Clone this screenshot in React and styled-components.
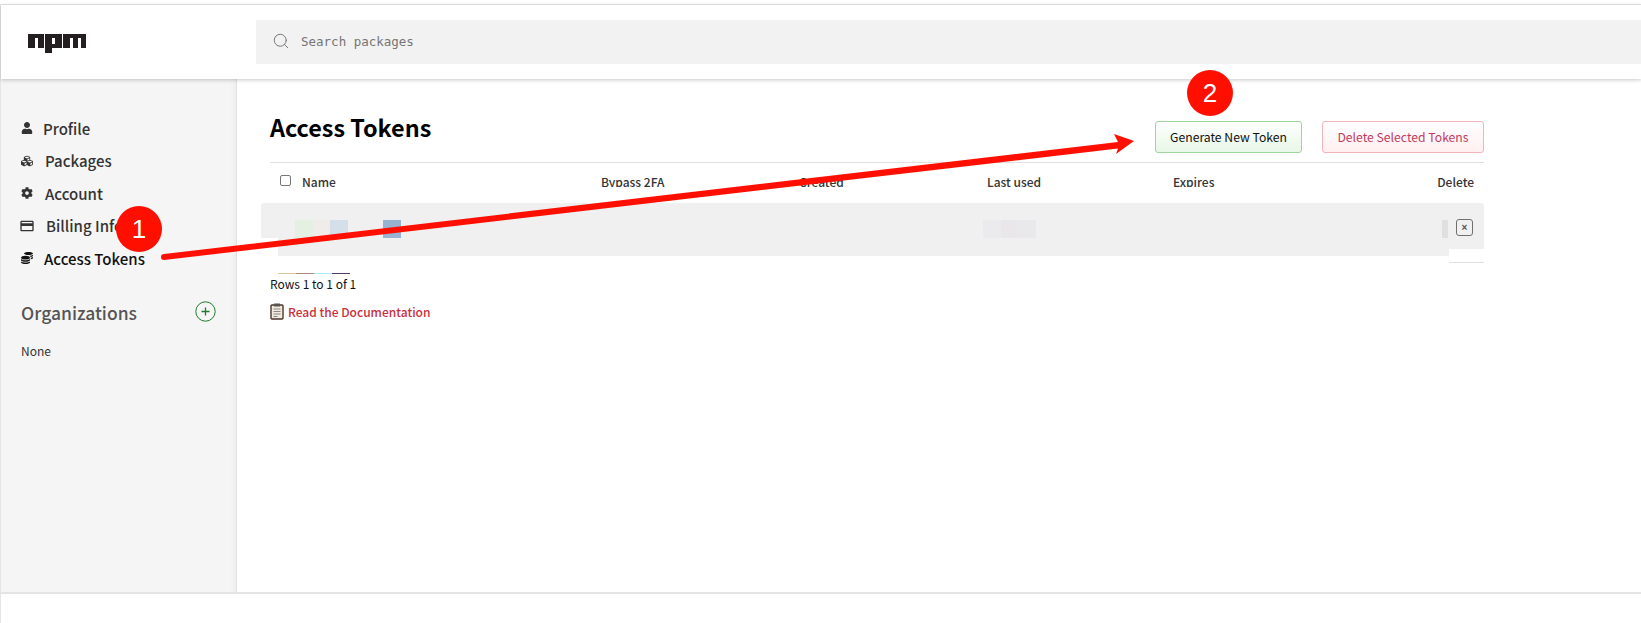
import React from 'react'
import styled, { createGlobalStyle } from 'styled-components'
import { FaUser, FaCubes, FaCog, FaCoins } from 'react-icons/fa'
import { MdCreditCard } from 'react-icons/md'
import { FiSearch } from 'react-icons/fi'

const sans = `"Noto Sans CJK SC", "Noto Sans CJK JP", "Noto Sans", sans-serif`

const GlobalStyle = createGlobalStyle`
  html, body {
    margin: 0;
    padding: 0;
    background: #fff;
    font-family: ${sans};
  }
`

const Page = styled.div`
  position: relative;
  width: 1641px;
  height: 623px;
  overflow: hidden;
  padding-top: 4px;
  box-sizing: border-box;
`

const Frame = styled.div`
  display: flex;
  flex-direction: column;
  height: 100%;
  border-top: 1px solid #e5e5e5;
  border-left: 1px solid #e5e5e5;
`

const Header = styled.header`
  display: flex;
  align-items: center;
  flex: 0 0 74px;
  box-shadow: 0 1px 4px rgba(0, 0, 0, 0.22);
  position: relative;
  z-index: 2;
  background: #fff;
`

const Logo = styled.svg`
  width: 58px;
  height: 19px;
  margin: 3px 0 0 27px;
  flex: none;
`

const SearchBox = styled.div`
  display: flex;
  align-items: center;
  gap: 11px;
  flex: 1;
  height: 44px;
  margin-left: 170px;
  padding: 0 0 2px 16px;
  box-sizing: border-box;
  background: #f2f2f2;
  color: #757575;
  font: 12.5px "DejaVu Sans Mono", "Liberation Mono", monospace;
`

const Body = styled.div`
  display: flex;
  flex: 0 0 513px;
`

const Sidebar = styled.aside`
  flex: 0 0 236px;
  box-sizing: border-box;
  padding: 38px 20px 0 20px;
  background: #f5f5f5;
  border-right: 1px solid #e0e0e0;
  box-shadow: inset -8px 0 8px -8px rgba(0, 0, 0, 0.06);
`

const NavList = styled.nav`
  display: flex;
  flex-direction: column;
  gap: 10px;
`

const NavItem = styled.div`
  display: flex;
  align-items: center;
  height: 22.5px;
  font-size: 15px;
  font-weight: 500;
  color: ${p => (p.$active ? '#111' : '#333')};
  svg {
    flex: none;
    width: ${p => p.$icon || 12}px;
    height: ${p => p.$icon || 12}px;
    margin-left: ${p => (p.$icon ? -2 : 0)}px;
    margin-right: ${p => p.$gap}px;
  }
`

const OrgHead = styled.div`
  display: flex;
  align-items: center;
  justify-content: space-between;
  margin-top: 30px;
  font-size: 17.5px;
  font-weight: 500;
  color: #555;
`

const PlusBadge = styled.svg`
  width: 21px;
  height: 21px;
  margin-top: -2px;
`

const NoneNote = styled.p`
  margin: 17px 0 0;
  font-size: 12px;
  color: #333;
`

const Main = styled.main`
  position: relative;
  flex: none;
  width: 1247px;
  padding: 30px 0 0 33px;
  box-sizing: border-box;
`

const TitleRow = styled.div`
  display: flex;
  align-items: flex-start;
  height: 53px;
  border-bottom: 1px solid #e0e0e0;
`

const Title = styled.h1`
  flex: 1;
  margin: 0;
  font-size: 23.4px;
  line-height: 36px;
  font-weight: 700;
  color: #000;
`

const ActionButton = styled.button`
  height: 32px;
  padding: 0;
  width: ${p => p.$width}px;
  margin: 12px 0 0 ${p => p.$gap}px;
  border-radius: 3px;
  font: 12.2px ${sans};
  border: 1px solid ${p => (p.$danger ? '#f3b4ba' : '#9dd59a')};
  color: ${p => (p.$danger ? '#c23a5e' : '#111')};
  background: linear-gradient(${p => (p.$danger ? '#fff, #fff0f1' : '#fff, #e7f7e6')});
`

const HeadRow = styled.div`
  display: grid;
  grid-template-columns: 22px 299px 198px 188px 186px 1fr auto;
  height: 30px;
  align-items: start;
  font-size: 12px;
  font-weight: 500;
  line-height: 18px;
  color: #333;
  padding: 10px 10px 0 10px;
`

// the reference has its header text cut by a white cover along the bottom
const HeadCell = styled.span`
  white-space: nowrap;
  overflow: hidden;
  height: ${p => (p.$whole ? 18 : 14)}px;
`

const Tick = styled.span`
  display: block;
  width: 9px;
  height: 9px;
  margin-top: 2px;
  border: 1px solid #767676;
  border-radius: 2px;
`

const TokenRow = styled.div`
  position: relative;
  display: flex;
  align-items: flex-start;
  height: 53px;
  margin-left: -9px;
  padding-top: 17px;
  box-sizing: border-box;
  background: #f0f0f0;
  border-radius: 3px 3px 0 0;
`

const Smudge = styled.span`
  flex: none;
  height: 18px;
  width: ${p => p.$w}px;
  margin-left: ${p => p.$at || 0}px;
  background: ${p => p.$c};
`

const CornerPatch = styled.span`
  position: absolute;
  bottom: 0;
  ${p => (p.$right ? 'right: 0;' : 'left: 0;')}
  width: ${p => p.$w}px;
  height: ${p => p.$h}px;
  background: #fff;
`

const RemoveButton = styled.span`
  display: flex;
  align-items: center;
  justify-content: center;
  flex: none;
  width: 15px;
  height: 15px;
  margin: -1px 0 0 8px;
  border: 1px solid #707070;
  border-radius: 3px;
  color: #555;
  font: 700 10px/1 "Liberation Sans", sans-serif;
`

const TableEnd = styled.div`
  width: 35px;
  margin: 6px 0 0 auto;
  border-top: 1px solid #e0e0e0;
`

const Strip = styled.div`
  display: flex;
  margin: 10px 0 0 8px;
  height: 1px;
`

const StripPart = styled.span`
  width: 18px;
  background: ${p => p.$c};
`

const RowsNote = styled.p`
  margin: 0;
  font-size: 12px;
  line-height: 20px;
  color: #111;
`

const DocLink = styled.a`
  display: flex;
  align-items: center;
  gap: 4px;
  margin-top: 9px;
  font-size: 12px;
  font-weight: 500;
  color: #c7303c;
`

const Footer = styled.div`
  flex: 1;
  border-top: 2px solid #e5e5e5;
`

const Pin = styled.div`
  position: absolute;
  left: ${p => p.$x}px;
  top: ${p => p.$y}px;
  width: 46px;
  height: 46px;
  border-radius: 50%;
  background: #ff0f00;
  color: #fff;
  display: flex;
  align-items: center;
  justify-content: center;
  font: 26px "Liberation Sans", sans-serif;
  z-index: 4;
`

const ArrowLayer = styled.svg`
  position: absolute;
  left: 0;
  top: 0;
  z-index: 3;
  pointer-events: none;
`

const navItems = [
  { label: 'Profile', Icon: FaUser, gap: 10 },
  { label: 'Packages', Icon: FaCubes, gap: 12 },
  { label: 'Account', Icon: FaCog, gap: 12 },
  { label: 'Billing Info', Icon: MdCreditCard, gap: 11, icon: 16 },
  { label: 'Access Tokens', Icon: FaCoins, gap: 11, active: true },
]

const columns = ['Name', 'Bypass 2FA', 'Created', 'Last used', 'Expires', 'Delete']

const App = () => {
  return (
    <Page>
      <GlobalStyle />
      <Frame>
        <Header>
          <Logo viewBox="0 0 58 19">
            <path
              fill="#231f20"
              fillRule="evenodd"
              d="M0 0h16v14h-6V4H7v10H0zM17 0h17v14h-10v5h-7zM24 4v6h3V4zM35 0h23v14h-5V4h-3v10h-5V4h-3v10h-7z"
            />
          </Logo>
          <SearchBox>
            <FiSearch size={18} strokeWidth={1.3} />
            Search packages
          </SearchBox>
        </Header>
        <Body>
          <Sidebar>
            <NavList>
              {navItems.map(({ label, Icon, gap, icon, active }) => (
                <NavItem key={label} $gap={gap} $icon={icon} $active={active}>
                  <Icon />
                  {label}
                </NavItem>
              ))}
            </NavList>
            <OrgHead>
              Organizations
              <PlusBadge viewBox="0 0 21 21">
                <circle cx="10.5" cy="10.5" r="9.7" fill="none" stroke="#1f7a2e" strokeWidth="1" />
                <path d="M10.5 6.5v8M6.5 10.5h8" stroke="#1f7a2e" strokeWidth="1.3" />
              </PlusBadge>
            </OrgHead>
            <NoneNote>None</NoneNote>
          </Sidebar>
          <Main>
            <TitleRow>
              <Title>Access Tokens</Title>
              <ActionButton $width={147} $gap={0}>Generate New Token</ActionButton>
              <ActionButton $width={162} $gap={20} $danger>Delete Selected Tokens</ActionButton>
            </TitleRow>
            <HeadRow>
              <Tick />
              {columns.map(col => (
                <HeadCell key={col} $whole={col === 'Delete'}>{col}</HeadCell>
              ))}
            </HeadRow>
            <TokenRow>
              <Smudge $at={34} $w={18} $c="#e4f0e2" />
              <Smudge $w={17} $c="#f0ecea" />
              <Smudge $w={18} $c="#d4dfe9" />
              <Smudge $at={35} $w={18} $c="#98b3cf" />
              <Smudge $at={582} $w={18} $c="#ebebee" />
              <Smudge $w={16} $c="#e9e7e9" />
              <Smudge $w={19} $c="#e9e9eb" />
              <Smudge $at={406} $w={6} $c="#e0e0e0" />
              <RemoveButton>×</RemoveButton>
              <CornerPatch $w={17} $h={18} />
              <CornerPatch $right $w={35} $h={7} />
            </TokenRow>
            <TableEnd />
            <Strip>
              <StripPart $c="#d8c49a" />
              <StripPart $c="#a98a7c" />
              <StripPart $c="#a8e8f2" />
              <StripPart $c="#5b3a66" />
            </Strip>
            <RowsNote>Rows 1 to 1 of 1</RowsNote>
            <DocLink>
              <svg width="14" height="17" viewBox="0 0 14 17">
                <rect x="1" y="2" width="12" height="14" rx="1" fill="#f2ebdd" stroke="#4a3528" strokeWidth="1.4" />
                <rect x="4" y="0.5" width="6" height="3" fill="#555" />
                <path d="M3.5 6h7M3.5 8.5h7M3.5 11h7M3.5 13.5h4" stroke="#888" strokeWidth="1" />
              </svg>
              Read the Documentation
            </DocLink>
          </Main>
        </Body>
        <Footer />
      </Frame>
      <ArrowLayer width="1641" height="623">
        <path d="M164 254 L1118 142 L1114 134 L1134 141 L1116 154 L1118 148.5 L164 260 A3 3 0 0 1 164 254 Z" fill="#ff0f00" />
      </ArrowLayer>
      <Pin $x={116} $y={206}>1</Pin>
      <Pin $x={1187} $y={70}>2</Pin>
    </Page>
  )
}

export default App
